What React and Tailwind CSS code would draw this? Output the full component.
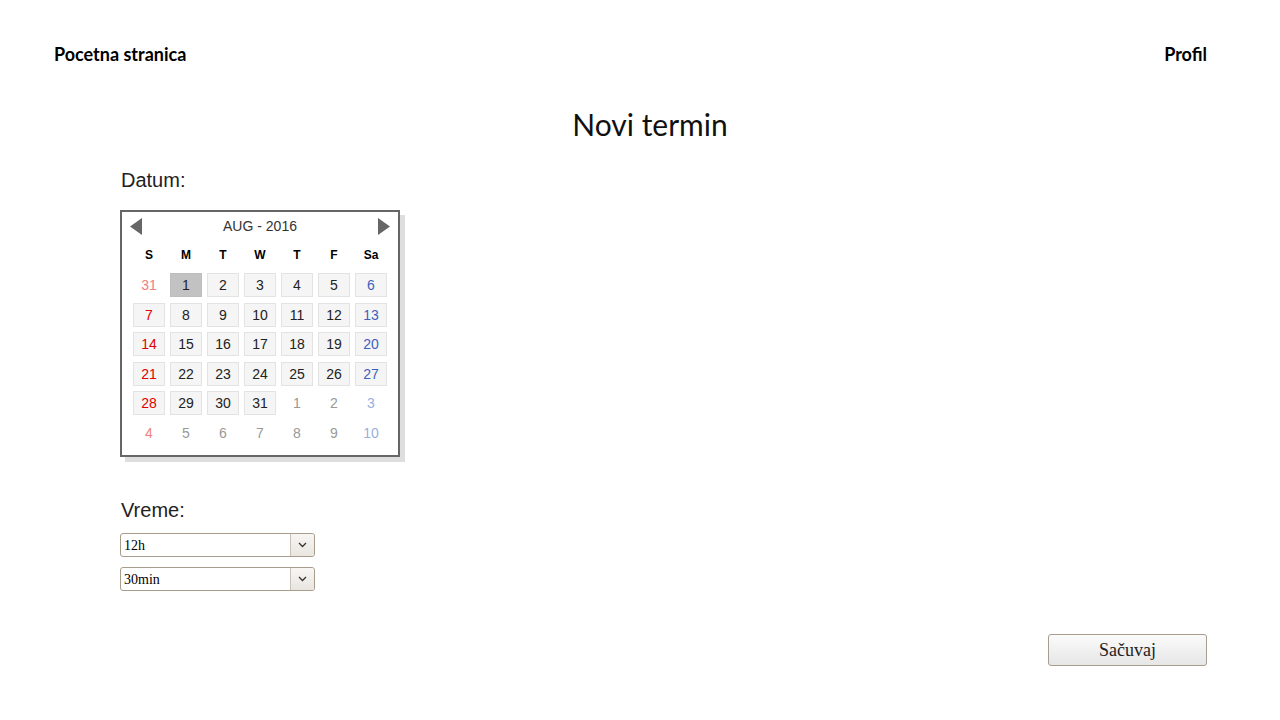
import React from "react";

const weeks = [
  [
    { d: 31, c: "text-[#f08080]", cell: false },
    { d: 1, c: "text-[#222]", cell: "sel" },
    { d: 2 }, { d: 3 }, { d: 4 }, { d: 5 },
    { d: 6, c: "text-[#3f5fbf]" },
  ],
  [
    { d: 7, c: "text-[#e00000]" }, { d: 8 }, { d: 9 }, { d: 10 }, { d: 11 }, { d: 12 },
    { d: 13, c: "text-[#3f5fbf]" },
  ],
  [
    { d: 14, c: "text-[#e00000]" }, { d: 15 }, { d: 16 }, { d: 17 }, { d: 18 }, { d: 19 },
    { d: 20, c: "text-[#3f5fbf]" },
  ],
  [
    { d: 21, c: "text-[#e00000]" }, { d: 22 }, { d: 23 }, { d: 24 }, { d: 25 }, { d: 26 },
    { d: 27, c: "text-[#3f5fbf]" },
  ],
  [
    { d: 28, c: "text-[#e00000]" }, { d: 29 }, { d: 30 }, { d: 31 },
    { d: 1, c: "text-[#999]", cell: false },
    { d: 2, c: "text-[#999]", cell: false },
    { d: 3, c: "text-[#9aaedd]", cell: false },
  ],
  [
    { d: 4, c: "text-[#f08080]", cell: false },
    { d: 5, c: "text-[#999]", cell: false },
    { d: 6, c: "text-[#999]", cell: false },
    { d: 7, c: "text-[#999]", cell: false },
    { d: 8, c: "text-[#999]", cell: false },
    { d: 9, c: "text-[#999]", cell: false },
    { d: 10, c: "text-[#9aaedd]", cell: false },
  ],
];

function Cell({ d, c = "text-[#222]", cell = true }) {
  let box = "border border-transparent";
  if (cell === "sel") box = "border border-[#bdbdbd] bg-[#c2c2c2]";
  else if (cell) box = "border border-[#e3e3e3] bg-[#f5f5f5]";
  return (
    <div className={`h-[24px] w-[32px] flex items-center justify-center text-[14px] leading-none ${box} ${c}`}>
      {d}
    </div>
  );
}

function Select({ value }) {
  return (
    <div className="flex h-[24px] w-[195px] rounded-[3px] border border-[#a89c8e] bg-white">
      <div className="flex-1 flex items-center pl-[3px] text-[14px] text-black" style={{ fontFamily: '"Liberation Serif", serif' }}>
        {value}
      </div>
      <div className="w-[24px] flex items-center justify-center border-l border-[#c9c2b8] rounded-r-[3px] bg-gradient-to-b from-[#f7f6f3] to-[#e9e6e0]">
        <svg width="9" height="6" viewBox="0 0 9 6">
          <path d="M1 1 L4.5 4.5 L8 1" fill="none" stroke="#333" strokeWidth="1.3" />
        </svg>
      </div>
    </div>
  );
}

export default function App() {
  return (
    <div className="w-[1280px] h-[720px] bg-white overflow-hidden" style={{ fontFamily: '"Liberation Sans", Arial, sans-serif' }}>
      <div className="flex justify-between pl-[54px] pr-[73px] pt-[43px] text-[18px] leading-[22px] font-bold text-black" style={{ fontFamily: 'Lato, sans-serif' }}>
        <span>Pocetna stranica</span>
        <span>Profil</span>
      </div>

      <div className="mt-[41px] pl-[20px] flex justify-center text-[30px] leading-[36px] text-[#111]" style={{ fontFamily: 'Lato, sans-serif' }}>
        Novi termin
      </div>

      <div className="pl-[120px]">
        <div className="mt-[26px] text-[20px] leading-[24px] text-[#222] pl-[1px]">Datum:</div>

        <div className="mt-[18px] w-[280px] h-[247px] border-2 border-[#666] bg-white shadow-[5px_5px_0_#dedede]">
          <div className="h-[28px] flex items-center justify-between px-[8px]">
            <svg width="12" height="17" viewBox="0 0 12 17">
              <path d="M12 0 L0 8.5 L12 17 Z" fill="#666" />
            </svg>
            <span className="text-[14px] text-[#333]">AUG - 2016</span>
            <svg width="12" height="17" viewBox="0 0 12 17">
              <path d="M0 0 L12 8.5 L0 17 Z" fill="#666" />
            </svg>
          </div>
          <div className="px-[11px]">
            <div className="h-[30px] grid grid-cols-[repeat(7,32px)] gap-x-[5px] items-center text-[12px] font-bold text-black">
              {["S", "M", "T", "W", "T", "F", "Sa"].map((h, i) => (
                <div key={i} className="text-center">{h}</div>
              ))}
            </div>
            <div className="mt-[3px] grid grid-cols-[repeat(7,32px)] gap-x-[5px] gap-y-[5.5px]">
              {weeks.flat().map((c, i) => (
                <Cell key={i} {...c} />
              ))}
            </div>
          </div>
        </div>

        <div className="mt-[41px] text-[20px] leading-[24px] text-[#222] pl-[1px]">Vreme:</div>
        <div className="mt-[11px] flex flex-col gap-[10px]">
          <Select value="12h" />
          <Select value="30min" />
        </div>
      </div>

      <div className="mt-[43px] flex justify-end pr-[73px]">
        <button
          className="w-[159px] h-[32px] rounded-[3px] border border-[#a89c8e] bg-gradient-to-b from-[#fbfbfb] to-[#e6e6e6] text-[18px] leading-none text-[#222]"
          style={{ fontFamily: '"Liberation Serif", serif' }}
        >
          Sačuvaj
        </button>
      </div>
    </div>
  );
}
